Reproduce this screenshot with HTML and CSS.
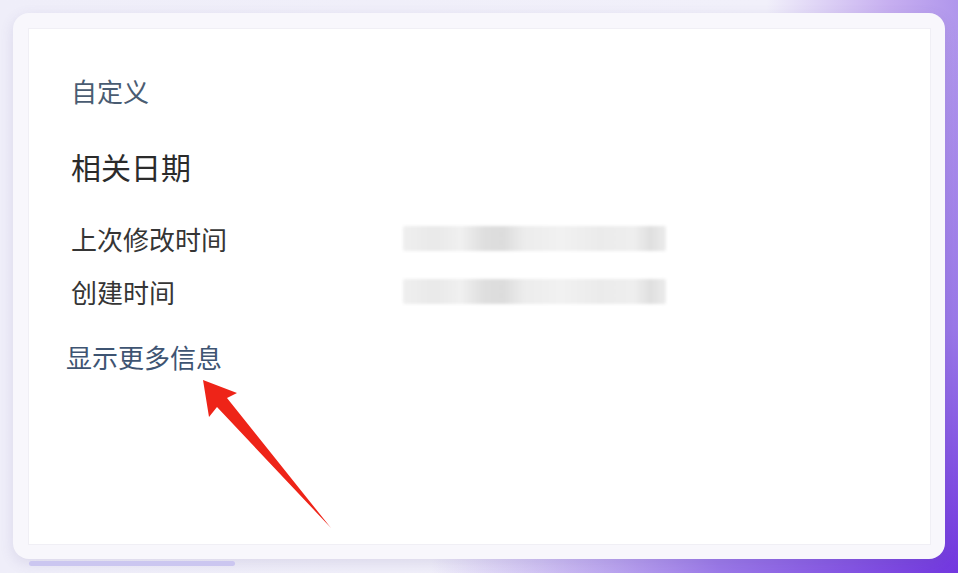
FILE: index.html
```html
<!DOCTYPE html>
<html lang="zh-CN">
<head>
<meta charset="UTF-8">
<meta name="viewport" content="width=device-width, initial-scale=1.0">
<title>属性</title>
<link rel="stylesheet" href="styles.css">
</head>
<body>
<!-- 属性卡片 -->
<div class="card">
  <div class="panel">
    <div class="custom">自定义</div>
    <div class="section-title">相关日期</div>
    <div class="row">
      <span class="label">上次修改时间</span>
      <span class="value-blur"></span>
    </div>
    <div class="row">
      <span class="label">创建时间</span>
      <span class="value-blur"></span>
    </div>
    <div class="more-link">显示更多信息</div>
  </div>
</div>
<div class="tab-strip"></div>

<!-- 红色箭头标注 -->
<svg class="arrow" width="958" height="573" viewBox="0 0 958 573">
  <polygon points="203,380 237,393 227,398 331,528 217,407 209,417" fill="#ee2418"/>
</svg>
</body>
</html>
```

FILE: styles.css
```css
/* 页面背景 */
html, body {
    margin: 0;
    padding: 0;
}

body {
    width: 958px;
    height: 573px;
    overflow: hidden;
    padding: 13px 0 0 13px;
    box-sizing: border-box;
    font-family: "Noto Sans CJK SC", "Noto Sans", sans-serif;
    background:
        radial-gradient(ellipse 55% 95% at 100% 100%, #7237df 0%, #9a78e8 45%, rgba(210, 198, 245, 0) 100%),
        linear-gradient(to right, #efeef9 0%, #f1f0fa 80%, #c6aef0 93%, #b096ec 100%);
}

/* 卡片外框 */
.card {
    width: 932px;
    height: 546px;
    box-sizing: border-box;
    padding: 15px 14px 14px 15px;
    background-color: #f8f7fc;
    border-radius: 16px;
    box-shadow: 0 4px 14px rgba(90, 80, 150, 0.14);
}

/* 白色内容区 */
.panel {
    height: 100%;
    box-sizing: border-box;
    padding: 44px 42px;
    background-color: #fff;
    border: 1px solid #f0eff5;
}

.custom {
    font-size: 26px;
    line-height: 36px;
    color: #4a5c72;
}

.section-title {
    margin-top: 37px;
    margin-bottom: 34px;
    font-size: 30px;
    line-height: 40px;
    color: #2b2b2b;
}

.row {
    display: flex;
    align-items: center;
    height: 36px;
    margin-bottom: 17px;
}

.label {
    width: 332px;
    font-size: 26px;
    color: #353535;
}

/* 模糊处理的日期 */
.value-blur {
    width: 263px;
    height: 25px;
    border-radius: 2px;
    background: linear-gradient(to right,
        #efefef 0%, #e9e9e9 12%, #f0f0f0 22%, #dedede 31%, #dcdcdc 38%,
        #ececec 46%, #f1f1f1 60%, #ebebeb 75%, #eeeeee 88%, #dfdfdf 94%, #ececec 100%);
    filter: blur(1.5px);
}

.more-link {
    margin-top: 30px;
    margin-left: -5px;
    font-size: 26px;
    line-height: 36px;
    color: #3e5472;
}

/* 底部标签条 */
.tab-strip {
    width: 206px;
    height: 5px;
    margin: 2px 0 0 16px;
    border-radius: 3px;
    background-color: #cbc6f0;
}

/* 箭头 */
.arrow {
    position: absolute;
    left: 0;
    top: 0;
    pointer-events: none;
    filter: blur(0.6px);
}
```
